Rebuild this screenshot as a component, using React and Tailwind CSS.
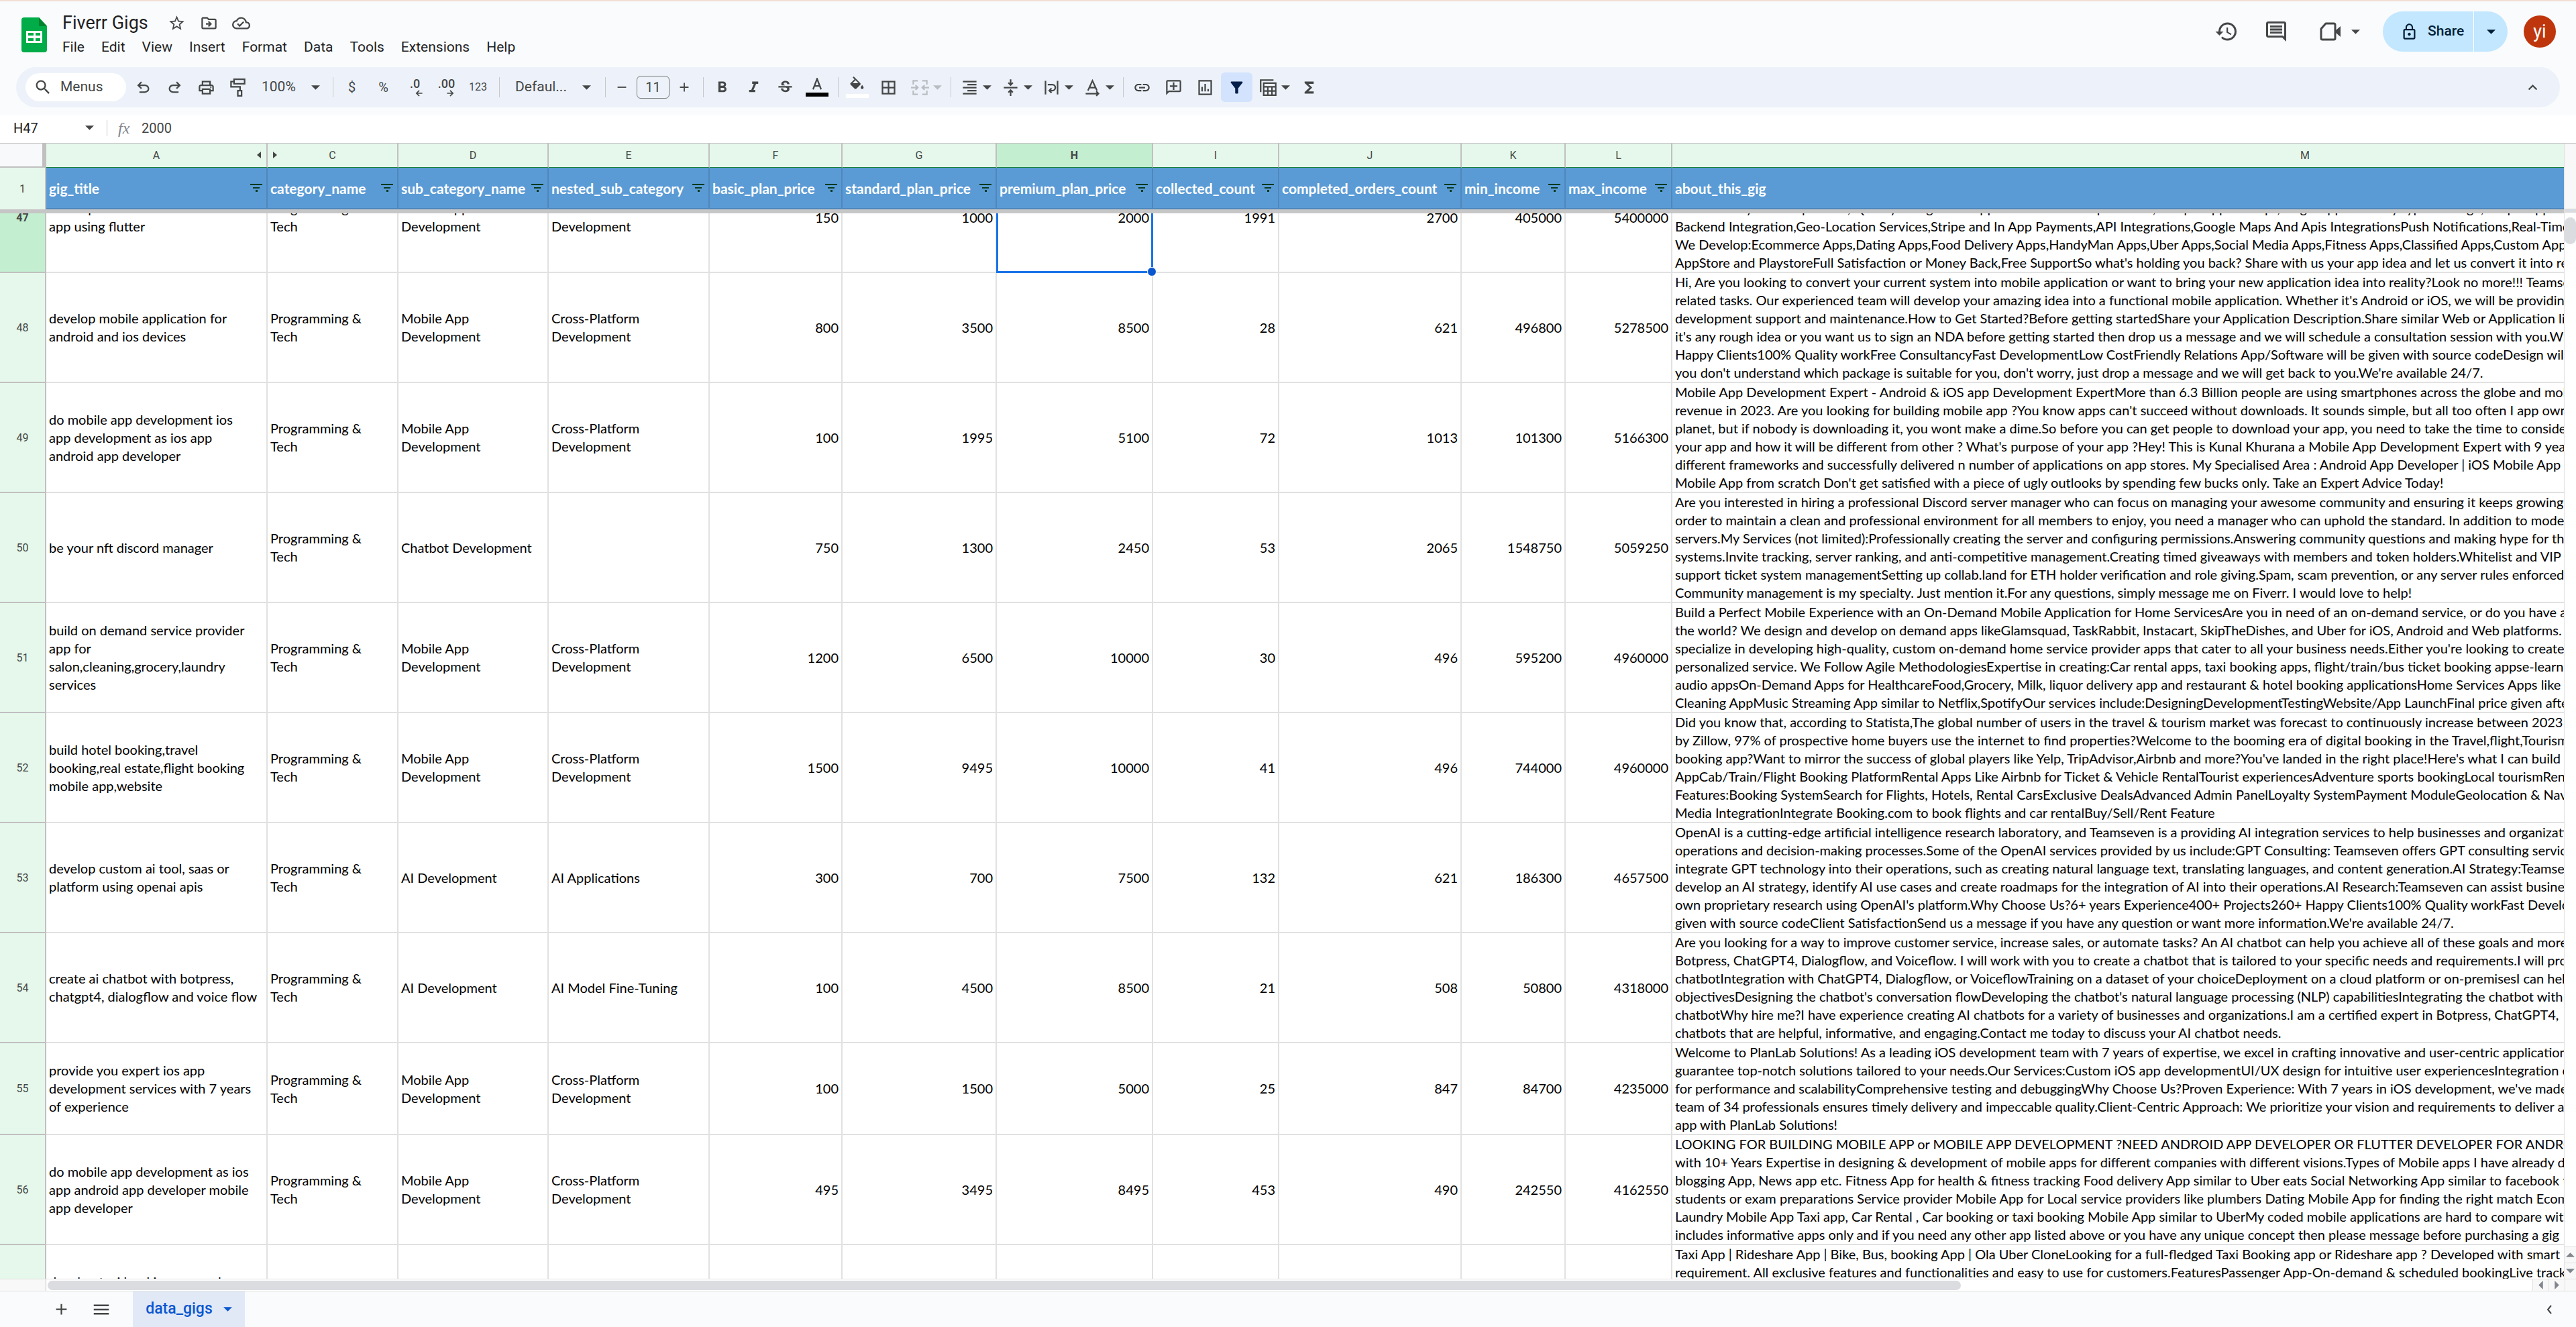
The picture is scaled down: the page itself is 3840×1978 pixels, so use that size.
import React, { useLayoutEffect, useRef, useState } from 'react';
import {
  MdOutlineStarBorder, MdOutlineDriveFileMove, MdOutlineCloudDone, MdHistory, MdOutlineComment,
  MdSearch, MdOutlineLocalPrintshop, MdFormatBold, MdFormatItalic, MdStrikethroughS, MdBorderAll,
  MdLink, MdOutlineAddComment, MdFunctions, MdAdd, MdRemove, MdMenu, MdKeyboardArrowUp,
  MdFilterAlt, MdFormatAlignRight, MdLockOutline,
} from 'react-icons/md';

const menus = ['File', 'Edit', 'View', 'Insert', 'Format', 'Data', 'Tools', 'Extensions', 'Help'];

const columns = [
  { letter: 'A', name: 'gig_title', width: 'w-[330px]' },
  { letter: 'C', name: 'category_name', width: 'w-[195px]' },
  { letter: 'D', name: 'sub_category_name', width: 'w-[224px]' },
  { letter: 'E', name: 'nested_sub_category', width: 'w-[240px]' },
  { letter: 'F', name: 'basic_plan_price', width: 'w-[198px]' },
  { letter: 'G', name: 'standard_plan_price', width: 'w-[230px]' },
  { letter: 'H', name: 'premium_plan_price', width: 'w-[233px]' },
  { letter: 'I', name: 'collected_count', width: 'w-[188px]' },
  { letter: 'J', name: 'completed_orders_count', width: 'w-[272px]' },
  { letter: 'K', name: 'min_income', width: 'w-[155px]' },
  { letter: 'L', name: 'max_income', width: 'w-[159px]' },
  { letter: 'M', name: 'about_this_gig', width: 'w-[1888px]' },
];

const prog = 'Programming &\nTech';
const mobile = 'Mobile App\nDevelopment';
const cross = 'Cross-Platform\nDevelopment';

const rows = [
  {
    no: 47,
    text: ['develop ios and android mobile\napp using flutter', prog, mobile, cross],
    nums: [150, 1000, 2000, 1991, 2700, 405000, 5400000],
    about: [
      'Are you looking for a mobile app developer?',
      'I will build a complete app for you.',
      'User Friendly and Responsive, Quality Design with app screens for both platforms, Unique app concept, single app for every type of usage, simple app',
      'Backend Integration,Geo-Location Services,Stripe and In App Payments,API Integrations,Google Maps And Apis IntegrationsPush Notifications,Real-Time Chat',
      'We Develop:Ecommerce Apps,Dating Apps,Food Delivery Apps,HandyMan Apps,Uber Apps,Social Media Apps,Fitness Apps,Classified Apps,Custom Apps',
      "AppStore and PlaystoreFull Satisfaction or Money Back,Free SupportSo what's holding you back? Share with us your app idea and let us convert it into reality",
    ],
  },
  {
    no: 48,
    text: ['develop mobile application for\nandroid and ios devices', prog, mobile, cross],
    nums: [800, 3500, 8500, 28, 621, 496800, 5278500],
    about: [
      'Hi, Are you looking to convert your current system into mobile application or want to bring your new application idea into reality?Look no more!!! Teamseven',
      "related tasks. Our experienced team will develop your amazing idea into a functional mobile application. Whether it's Android or iOS, we will be providing",
      'development support and maintenance.How to Get Started?Before getting startedShare your Application Description.Share similar Web or Application links',
      "it's any rough idea or you want us to sign an NDA before getting started then drop us a message and we will schedule a consultation session with you.Why",
      'Happy Clients100% Quality workFree ConsultancyFast DevelopmentLow CostFriendly Relations App/Software will be given with source codeDesign will be',
      "you don't understand which package is suitable for you, don't worry, just drop a message and we will get back to you.We're available 24/7.",
    ],
  },
  {
    no: 49,
    text: ['do mobile app development ios\napp development as ios app\nandroid app developer', prog, mobile, cross],
    nums: [100, 1995, 5100, 72, 1013, 101300, 5166300],
    about: [
      'Mobile App Development Expert - Android & iOS app Development ExpertMore than 6.3 Billion people are using smartphones across the globe and mobile',
      "revenue in 2023. Are you looking for building mobile app ?You know apps can't succeed without downloads. It sounds simple, but all too often I app owners",
      'planet, but if nobody is downloading it, you wont make a dime.So before you can get people to download your app, you need to take the time to consider',
      "your app and how it will be different from other ? What's purpose of your app ?Hey! This is Kunal Khurana a Mobile App Development Expert with 9 years",
      'different frameworks and successfully delivered n number of applications on app stores. My Specialised Area : Android App Developer | iOS Mobile App',
      "Mobile App from scratch Don't get satisfied with a piece of ugly outlooks by spending few bucks only. Take an Expert Advice Today!",
    ],
  },
  {
    no: 50,
    text: ['be your nft discord manager', prog, 'Chatbot Development', ''],
    nums: [750, 1300, 2450, 53, 2065, 1548750, 5059250],
    about: [
      'Are you interested in hiring a professional Discord server manager who can focus on managing your awesome community and ensuring it keeps growing?',
      'order to maintain a clean and professional environment for all members to enjoy, you need a manager who can uphold the standard. In addition to moderating',
      'servers.My Services (not limited):Professionally creating the server and configuring permissions.Answering community questions and making hype for the',
      'systems.Invite tracking, server ranking, and anti-competitive management.Creating timed giveaways with members and token holders.Whitelist and VIP role',
      'support ticket system managementSetting up collab.land for ETH holder verification and role giving.Spam, scam prevention, or any server rules enforced',
      'Community management is my specialty. Just mention it.For any questions, simply message me on Fiverr. I would love to help!',
    ],
  },
  {
    no: 51,
    text: ['build on demand service provider\napp for\nsalon,cleaning,grocery,laundry\nservices', prog, mobile, cross],
    nums: [1200, 6500, 10000, 30, 496, 595200, 4960000],
    about: [
      'Build a Perfect Mobile Experience with an On-Demand Mobile Application for Home ServicesAre you in need of an on-demand service, or do you have a',
      'the world? We design and develop on demand apps likeGlamsquad, TaskRabbit, Instacart, SkipTheDishes, and Uber for iOS, Android and Web platforms. We',
      "specialize in developing high-quality, custom on-demand home service provider apps that cater to all your business needs.Either you're looking to create",
      'personalized service. We Follow Agile MethodologiesExpertise in creating:Car rental apps, taxi booking apps, flight/train/bus ticket booking appse-learning',
      'audio appsOn-Demand Apps for HealthcareFood,Grocery, Milk, liquor delivery app and restaurant & hotel booking applicationsHome Services Apps like',
      'Cleaning AppMusic Streaming App similar to Netflix,SpotifyOur services include:DesigningDevelopmentTestingWebsite/App LaunchFinal price given after',
    ],
  },
  {
    no: 52,
    text: ['build hotel booking,travel\nbooking,real estate,flight booking\nmobile app,website', prog, mobile, cross],
    nums: [1500, 9495, 10000, 41, 496, 744000, 4960000],
    about: [
      'Did you know that, according to Statista,The global number of users in the travel & tourism market was forecast to continuously increase between 2023',
      'by Zillow, 97% of prospective home buyers use the internet to find properties?Welcome to the booming era of digital booking in the Travel,flight,Tourism',
      "booking app?Want to mirror the success of global players like Yelp, TripAdvisor,Airbnb and more?You've landed in the right place!Here's what I can build",
      'AppCab/Train/Flight Booking PlatformRental Apps Like Airbnb for Ticket & Vehicle RentalTourist experiencesAdventure sports bookingLocal tourismRental',
      'Features:Booking SystemSearch for Flights, Hotels, Rental CarsExclusive DealsAdvanced Admin PanelLoyalty SystemPayment ModuleGeolocation & Nav',
      'Media IntegrationIntegrate Booking.com to book flights and car rentalBuy/Sell/Rent Feature',
    ],
  },
  {
    no: 53,
    text: ['develop custom ai tool, saas or\nplatform using openai apis', prog, 'AI Development', 'AI Applications'],
    nums: [300, 700, 7500, 132, 621, 186300, 4657500],
    about: [
      'OpenAI is a cutting-edge artificial intelligence research laboratory, and Teamseven is a providing AI integration services to help businesses and organizations',
      'operations and decision-making processes.Some of the OpenAI services provided by us include:GPT Consulting: Teamseven offers GPT consulting services',
      'integrate GPT technology into their operations, such as creating natural language text, translating languages, and content generation.AI Strategy:Teamseven',
      'develop an AI strategy, identify AI use cases and create roadmaps for the integration of AI into their operations.AI Research:Teamseven can assist business',
      "own proprietary research using OpenAI's platform.Why Choose Us?6+ years Experience400+ Projects260+ Happy Clients100% Quality workFast Development",
      "given with source codeClient SatisfactionSend us a message if you have any question or want more information.We're available 24/7.",
    ],
  },
  {
    no: 54,
    text: ['create ai chatbot with botpress,\nchatgpt4, dialogflow and voice flow', prog, 'AI Development', 'AI Model Fine-Tuning'],
    nums: [100, 4500, 8500, 21, 508, 50800, 4318000],
    about: [
      'Are you looking for a way to improve customer service, increase sales, or automate tasks? An AI chatbot can help you achieve all of these goals and more.',
      'Botpress, ChatGPT4, Dialogflow, and Voiceflow. I will work with you to create a chatbot that is tailored to your specific needs and requirements.I will provide',
      'chatbotIntegration with ChatGPT4, Dialogflow, or VoiceflowTraining on a dataset of your choiceDeployment on a cloud platform or on-premisesI can help',
      "objectivesDesigning the chatbot's conversation flowDeveloping the chatbot's natural language processing (NLP) capabilitiesIntegrating the chatbot with",
      'chatbotWhy hire me?I have experience creating AI chatbots for a variety of businesses and organizations.I am a certified expert in Botpress, ChatGPT4,',
      'chatbots that are helpful, informative, and engaging.Contact me today to discuss your AI chatbot needs.',
    ],
  },
  {
    no: 55,
    text: ['provide you expert ios app\ndevelopment services with 7 years\nof experience', prog, mobile, cross],
    nums: [100, 1500, 5000, 25, 847, 84700, 4235000],
    about: [
      'Welcome to PlanLab Solutions! As a leading iOS development team with 7 years of expertise, we excel in crafting innovative and user-centric applications',
      'guarantee top-notch solutions tailored to your needs.Our Services:Custom iOS app developmentUI/UX design for intuitive user experiencesIntegration of',
      "for performance and scalabilityComprehensive testing and debuggingWhy Choose Us?Proven Experience: With 7 years in iOS development, we've made",
      'team of 34 professionals ensures timely delivery and impeccable quality.Client-Centric Approach: We prioritize your vision and requirements to deliver an',
      'app with PlanLab Solutions!',
    ],
  },
  {
    no: 56,
    text: ['do mobile app development as ios\napp android app developer mobile\napp developer', prog, mobile, cross],
    nums: [495, 3495, 8495, 453, 490, 242550, 4162550],
    about: [
      'LOOKING FOR BUILDING MOBILE APP or MOBILE APP DEVELOPMENT ?NEED ANDROID APP DEVELOPER OR FLUTTER DEVELOPER FOR ANDROID & iOS ?',
      'with 10+ Years Expertise in designing & development of mobile apps for different companies with different visions.Types of Mobile apps I have already done',
      'blogging App, News app etc. Fitness App for health & fitness tracking Food delivery App similar to Uber eats Social Networking App similar to facebook for',
      'students or exam preparations Service provider Mobile App for Local service providers like plumbers Dating Mobile App for finding the right match Ecom',
      'Laundry Mobile App Taxi app, Car Rental , Car booking or taxi booking Mobile App similar to UberMy coded mobile applications are hard to compare with',
      'includes informative apps only and if you need any other app listed above or you have any unique concept then please message before purchasing a gig',
    ],
  },
  {
    no: 57,
    text: ['develop taxi booking app and\nrideshare app for android\nand ios', prog, mobile, cross],
    nums: ['', '', '', '', '', '', ''],
    about: [
      'Taxi App | Rideshare App | Bike, Bus, booking App | Ola Uber CloneLooking for a full-fledged Taxi Booking app or Rideshare app ? Developed with smart',
      'requirement. All exclusive features and functionalities and easy to use for customers.FeaturesPassenger App-On-demand & scheduled bookingLive tracking',
      ' ', ' ', ' ', ' ',
    ],
  },
];

const Caret = ({ className = '' }) => (
  <svg viewBox="0 0 12 6" className={`h-[7px] w-[13px] shrink-0 ${className}`} fill="currentColor" aria-hidden="true">
    <path d="M0 0h12L6 6z" />
  </svg>
);

const Separator = () => <div className="ml-2 mr-1 h-[30px] w-px shrink-0 bg-[#c7c7c7]" />;

const Tool = ({ label, active, children }) => (
  <button
    type="button"
    aria-label={label}
    className={`flex h-[44px] w-[47px] shrink-0 items-center justify-center rounded-md text-[27px] ${
      active ? 'bg-[#d3e3fd] text-[#041e49]' : ''
    }`}
  >
    {children}
  </button>
);

const DropTool = ({ label, disabled, children }) => (
  <button
    type="button"
    aria-label={label}
    disabled={disabled}
    className={`flex h-[44px] w-[61px] shrink-0 items-center pl-2 text-[27px] ${disabled ? 'opacity-30' : ''}`}
  >
    <span className="flex w-[30px] justify-center">{children}</span>
    <span className="flex w-[22px] justify-center"><Caret /></span>
  </button>
);

// stroke icon on a 24 grid
const Glyph = ({ children, className = 'size-[27px]' }) => (
  <svg viewBox="0 0 24 24" className={className} fill="none" stroke="currentColor" strokeWidth="2" aria-hidden="true">
    {children}
  </svg>
);

const FilterMark = () => (
  <button type="button" aria-label="Filter column" className="shrink-0 text-[#0a3a1e]">
    <svg viewBox="0 0 18 12" className="h-3 w-[18px]" fill="currentColor" aria-hidden="true">
      <path d="M0 0h18v2H0zM4 5h10v2H4zM8 9h3v3H8z" />
    </svg>
  </button>
);

const Cols = () => (
  <colgroup>
    <col className="w-[69px]" />
    {columns.map((c) => <col key={c.letter} className={c.width} />)}
  </colgroup>
);

const Header = () => (
  <header className="flex h-[98px] items-start justify-between pl-8 pr-[30px]">
    <div className="flex">
      <svg viewBox="0 0 38 52" className="mt-6 h-[52px] w-[38px]" aria-label="Sheets">
        <path d="M4 0h22l12 13v35a4 4 0 0 1-4 4H4a4 4 0 0 1-4-4V4a4 4 0 0 1 4-4z" fill="#00ac47" />
        <path d="M26 0l12 13H26z" fill="#00832d" />
        <path d="M7 20h24v18H7zm3 3v4h8v-4zm11 0v4h7v-4zM10 31v4h8v-4zm11 0v4h7v-4z" fill="#fff" fillRule="evenodd" />
      </svg>
      <div className="pl-[23px] pt-3">
        <div className="flex h-[40px] items-center text-[#444746]">
          <h1 className="w-[157px] text-[27px] leading-[40px] text-[#1f1f1f]">Fiverr Gigs</h1>
          <button type="button" aria-label="Star" className="flex w-12 text-[27px]"><MdOutlineStarBorder /></button>
          <button type="button" aria-label="Move" className="flex w-12 text-[27px]"><MdOutlineDriveFileMove /></button>
          <button type="button" aria-label="Saved to Drive" className="flex w-12 text-[27px]"><MdOutlineCloudDone /></button>
        </div>
        <nav className="mt-0.5 flex gap-[25px] text-[21px] leading-[28px] text-[#1f1f1f]">
          {menus.map((m) => <button type="button" key={m}>{m}</button>)}
        </nav>
      </div>
    </div>

    <div className="flex items-center pt-[15px] text-[#444746]">
      <button type="button" aria-label="Version history" className="text-[36px]"><MdHistory /></button>
      <button type="button" aria-label="Comments" className="ml-[38px] text-[36px]"><MdOutlineComment /></button>
      <button type="button" aria-label="Meet" className="ml-[47px] flex items-center gap-4">
        <svg viewBox="0 0 31 28" className="h-[28px] w-[31px]" aria-hidden="true">
          <path d="M9 2h12a2 2 0 0 1 2 2v20a2 2 0 0 1-2 2H4a2 2 0 0 1-2-2V10z" fill="none" stroke="currentColor" strokeWidth="3" strokeLinejoin="round" />
          <path d="M23 13l8-7v16l-8-7z" fill="currentColor" />
        </svg>
        <Caret />
      </button>
      <div className="ml-[34px] flex h-[60px] overflow-hidden rounded-full bg-[#c2e7ff] text-[#001d35]">
        <button type="button" className="flex w-[136px] items-center gap-[14px] border-r border-white pl-[26px] text-[21px] font-medium">
          <MdLockOutline className="size-[27px]" />
          Share
        </button>
        <button type="button" aria-label="Share options" className="flex w-[50px] items-center justify-center"><Caret /></button>
      </div>
      <button type="button" className="ml-6 flex size-12 items-center justify-center rounded-full bg-[#bf360c] text-[27px] text-white">
        yi
      </button>
    </div>
  </header>
);

const Toolbar = () => (
  <div className="ml-6 mr-6 flex h-[60px] items-center rounded-full bg-[#edf2fa] pl-[14px] text-[#444746]">
    <button type="button" className="mr-0.5 flex h-[42px] w-[150px] shrink-0 items-center gap-3 rounded-full bg-white pl-3 text-[21px]">
      <MdSearch className="size-[28px]" />
      Menus
    </button>
    <Tool label="Undo"><svg viewBox="0 -960 960 960" className="size-[27px]" fill="currentColor"><path d="M280-200v-80h284q63 0 109.5-40T720-420q0-60-46.5-100T564-560H312l104 104-56 56-200-200 200-200 56 56-104 104h252q97 0 166.500 63T800-420q0 94-69.500 157T564-200H280Z" /></svg></Tool>
    <Tool label="Redo"><svg viewBox="0 -960 960 960" className="size-[27px]" fill="currentColor"><path d="M396-200q-97 0-166.500-63T160-420q0-94 69.500-157T396-640h252L544-744l56-56 200 200-200 200-56-56 104-104H396q-63 0-109.500 40T240-420q0 60 46.500 100T396-280h284v80H396Z" /></svg></Tool>
    <Tool label="Print"><MdOutlineLocalPrintshop /></Tool>
    <Tool label="Paint format">
      <Glyph><path d="M7 1h14v6H7zM7 4H3v7h12v5M12 16h5v7h-5z" /></Glyph>
    </Tool>
    <label className="flex w-[110px] shrink-0 items-center pl-3 text-[21px]">
      <select aria-label="Zoom" className="w-[74px] appearance-none"><option>100%</option></select>
      <Caret />
    </label>
    <Separator />
    <Tool label="Currency"><span className="text-[20px]">$</span></Tool>
    <Tool label="Percent"><span className="text-[20px]">%</span></Tool>
    <Tool label="Decrease decimal places">
      <span className="flex flex-col text-[18px] font-medium leading-[18px]">
        .0
        <Glyph className="ml-3 h-[10px] w-3"><path d="M23 12H3M12 2L2 12l10 10" strokeWidth="4" /></Glyph>
      </span>
    </Tool>
    <Tool label="Increase decimal places">
      <span className="flex flex-col text-[18px] font-medium leading-[18px]">
        .00
        <Glyph className="ml-3 h-[10px] w-3"><path d="M1 12h20M12 2l10 10-10 10" strokeWidth="4" /></Glyph>
      </span>
    </Tool>
    <Tool label="More formats"><span className="text-[16px]">123</span></Tool>
    <Separator />
    <label className="flex w-[145px] shrink-0 items-center pl-[19px] text-[21px]">
      <select aria-label="Font" className="w-[100px] appearance-none"><option>Defaul...</option></select>
      <Caret />
    </label>
    <Separator />
    <button type="button" aria-label="Decrease font size" className="flex w-10 shrink-0 justify-center text-[22px]"><MdRemove /></button>
    <input aria-label="Font size" defaultValue="11" className="mx-0.5 h-[34px] w-[49px] shrink-0 rounded-md border border-[#747775] text-center text-[20px]" />
    <button type="button" aria-label="Increase font size" className="flex w-10 shrink-0 justify-center text-[22px]"><MdAdd /></button>
    <Separator />
    <Tool label="Bold"><MdFormatBold /></Tool>
    <Tool label="Italic"><MdFormatItalic /></Tool>
    <Tool label="Strikethrough"><MdStrikethroughS /></Tool>
    <Tool label="Text color">
      <span className="flex flex-col items-center">
        <Glyph className="h-[18px] w-5"><path d="M4 23L12 2l8 21M7 16h10" strokeWidth="3" /></Glyph>
        <span className="mt-1 h-[6px] w-[34px] bg-black" />
      </span>
    </Tool>
    <Separator />
    <Tool label="Fill color">
      <span className="flex flex-col items-center">
        <svg viewBox="0 0 24 20" className="h-[22px] w-[27px]" fill="currentColor" aria-hidden="true">
          <path d="M16.600 9L7.600 0 6.200 1.400l2.400 2.400-5.200 5.100a1.500 1.500 0 0 0 0 2.200l5.500 5.500c.6.6 1.600.6 2.200 0l5.500-5.500c.5-.6.5-1.500-.1-2.100zM6 9l4-4 4 4zM19 11.500s-2 2.200-2 3.500a2 2 0 0 0 4 0c0-1.300-2-3.500-2-3.500z" />
        </svg>
        <span className="mt-1 h-[6px] w-[34px] bg-white" />
      </span>
    </Tool>
    <Tool label="Borders"><MdBorderAll /></Tool>
    <DropTool label="Merge cells" disabled>
      <Glyph><path d="M9 3H3v5M15 3h6v5M9 21H3v-5M15 21h6v-5M0 12h9M6 9l3 3-3 3M24 12h-9M18 9l-3 3 3 3" /></Glyph>
    </DropTool>
    <Separator />
    <DropTool label="Horizontal align"><MdFormatAlignRight /></DropTool>
    <DropTool label="Vertical align">
      <Glyph><path d="M3 12h18M12 1v7M9 5.500l3 3 3-3M12 23v-7M9 18.500l3-3 3 3" /></Glyph>
    </DropTool>
    <DropTool label="Text wrapping">
      <Glyph><path d="M4 3v18M20 3v18M7 8h6a4 4 0 0 1 0 8h-3M12 13l-3 3 3 3" /></Glyph>
    </DropTool>
    <DropTool label="Text rotation">
      <Glyph><path d="M6 16L12 3l6 13M8 12h8M3 20h17M17 17l3 3-3 3" /></Glyph>
    </DropTool>
    <Separator />
    <Tool label="Insert link"><MdLink /></Tool>
    <Tool label="Insert comment"><MdOutlineAddComment className="-scale-x-100" /></Tool>
    <Tool label="Insert chart">
      <Glyph><path d="M4 3h16v18H4zM8 17V11M12 17V7M16 17v-3" /></Glyph>
    </Tool>
    <Tool label="Create a filter" active><MdFilterAlt /></Tool>
    <DropTool label="Table views">
      <Glyph><path d="M2 18V2h17M6 6h16v16H6zM6 11h16M6 16.500h16M11.500 11v11M17 11v11" /></Glyph>
    </DropTool>
    <Tool label="Functions"><MdFunctions /></Tool>
    <button type="button" aria-label="Hide the menus" className="ml-auto mr-[27px] text-[27px]"><MdKeyboardArrowUp /></button>
  </div>
);

const FormulaBar = () => (
  <div className="mt-3 flex h-[42px] items-center border-b border-[#c0c0c0] bg-white pb-1 text-[20px] text-[#1f1f1f]">
    <input aria-label="Name box" defaultValue="H47" className="w-[107px] pl-5 outline-none" />
    <button type="button" aria-label="Named ranges" className="flex w-[52px] justify-center text-[#444746]"><Caret /></button>
    <div className="h-6 w-px bg-[#c7c7c7]" />
    <span className="w-[51px] pl-4 font-['Liberation_Serif',serif] text-[24px] italic leading-[24px] text-[#80868b]">fx</span>
    <input aria-label="Formula" defaultValue="2000" className="min-w-0 flex-1 text-[#444746] outline-none" />
  </div>
);

const Grid = () => {
  const bodyRef = useRef(null);
  const [selected] = useState({ row: 47, letter: 'H' });

  useLayoutEffect(() => {
    bodyRef.current.scrollTop = 75;
  }, []);

  return (
    <div className="flex min-h-0 flex-1 flex-col bg-white">
      <div className="flex min-h-0 flex-1">
        <div className="flex min-w-0 flex-1 flex-col">
          <div className="shrink-0 overflow-hidden">
            <table className="w-[4381px] table-fixed border-separate border-spacing-0 text-left">
              <Cols />
              <thead>
                <tr className="h-[36px] text-center text-[16px] text-[#444746]">
                  <td className="border-b-2 border-r-[6px] border-[#c0c0c0] bg-[#f8f9fa]" />
                  {columns.map((c) => (
                    <th
                      key={c.letter}
                      scope="col"
                      className={`relative border-b border-r-2 border-b-[#188038] border-r-[#c0c0c0] p-0 text-center ${
                        c.letter === selected.letter ? 'bg-[#c3eed0] font-bold' : 'bg-[#e6f8eb] font-normal'
                      }`}
                    >
                      {c.letter}
                      {c.letter === 'A' && (
                        <svg viewBox="0 0 6 10" className="absolute right-2 top-3 h-[10px] w-[6px]" fill="currentColor"><path d="M6 0v10L0 5z" /></svg>
                      )}
                      {c.letter === 'C' && (
                        <svg viewBox="0 0 6 10" className="absolute left-2 top-3 h-[10px] w-[6px]" fill="currentColor"><path d="M0 0v10l6-5z" /></svg>
                      )}
                    </th>
                  ))}
                </tr>
                <tr className="h-[62px] font-['Lato',sans-serif] text-[21px] leading-[27px] text-white">
                  <td className="border-r-2 border-[#c0c0c0] bg-[#e6f8eb] text-center font-['Roboto',sans-serif] text-[16px] text-[#444746]">1</td>
                  {columns.map((c) => (
                    <th key={c.letter} scope="col" className="border-b-2 border-r-2 border-[#4f87bd] bg-[#5b9bd5] p-0 pl-1">
                      <div className="flex items-center justify-between pr-1.5">
                        {c.name}
                        {c.letter !== 'M' && <FilterMark />}
                      </div>
                    </th>
                  ))}
                </tr>
              </thead>
            </table>
          </div>
          <div className="h-[6px] shrink-0 bg-[#c6c6c6]" />
          <div ref={bodyRef} className="min-h-0 flex-1 overflow-hidden">
            <table className="w-[4381px] table-fixed border-separate border-spacing-0">
              <Cols />
              <tbody className="font-['Lato',sans-serif] text-[20px] leading-[27px] text-black">
                {rows.map((r) => (
                  <tr key={r.no}>
                    <th
                      scope="row"
                      className={`border-b-2 border-r-2 border-[#c0c0c0] p-0 font-['Roboto',sans-serif] text-[16px] text-[#444746] ${
                        r.no === selected.row ? 'bg-[#c3eed0] font-bold' : 'bg-[#e6f8eb] font-normal'
                      }`}
                    >
                      {r.no}
                    </th>
                    {r.text.map((t, i) => (
                      <td key={i} className="whitespace-pre border-b-2 border-r-2 border-[#e1e1e1] p-0 pl-1">{t}</td>
                    ))}
                    {r.nums.map((n, i) => (
                      <td key={i} className="relative border-b-2 border-r-2 border-[#e1e1e1] p-0 pr-1 text-right">
                        {n}
                        {r.no === selected.row && columns[i + 4].letter === selected.letter && (
                          <div className="absolute -bottom-0.5 -left-px -right-0.5 top-0 border-[3px] border-[#1a73e8]">
                            <span className="absolute -bottom-2 -right-2 z-10 size-[14px] rounded-full border border-white bg-[#0b57d0]" />
                          </div>
                        )}
                      </td>
                    ))}
                    <td className="overflow-hidden whitespace-pre border-b-2 border-[#e1e1e1] p-0 pl-1">{r.about.join('\n')}</td>
                  </tr>
                ))}
              </tbody>
            </table>
          </div>
        </div>
        {/* vertical scrollbar */}
        <div className="flex w-[18px] flex-col border-l border-[#e1e1e1]">
          <div className="h-[97px] bg-[#f8f8f8]" />
          <div className="h-[6px] bg-[#dadce0]" />
          <div className="mt-[7px] h-10 rounded-full bg-[#dadce0]" />
          <div className="mt-auto flex h-6 items-center justify-center border-t border-[#e1e1e1] bg-[#f8f8f8] text-[#80868b]"><Caret className="rotate-180" /></div>
          <div className="flex h-6 items-center justify-center border-t border-[#e1e1e1] bg-[#f8f8f8] text-[#80868b]"><Caret /></div>
        </div>
      </div>
      {/* horizontal scrollbar */}
      <div className="flex h-[18px] border-t border-[#e1e1e1]">
        <div className="w-[69px] border-r border-[#c0c0c0] bg-[#f8f8f8]" />
        <div className="flex-1 pl-0.5 pt-0.5"><div className="h-[14px] w-[77%] rounded-full bg-[#dadce0]" /></div>
        <div className="flex w-6 items-center justify-center border-l border-[#e1e1e1] bg-[#f8f8f8] text-[#80868b]"><Caret className="rotate-90" /></div>
        <div className="flex w-6 items-center justify-center border-l border-[#e1e1e1] bg-[#f8f8f8] text-[#80868b]"><Caret className="-rotate-90" /></div>
        <div className="w-[17px] border-l border-[#e1e1e1] bg-[#f8f8f8]" />
      </div>
    </div>
  );
};

const SheetTabs = () => (
  <footer className="flex h-[54px] items-center border-t border-[#e1e3e1] pl-[78px] text-[#444746]">
    <button type="button" aria-label="Add sheet" className="flex w-[58px] text-[27px]"><MdAdd /></button>
    <button type="button" aria-label="All sheets" className="flex w-[62px] text-[30px]"><MdMenu /></button>
    <button type="button" className="flex h-full w-[167px] items-center justify-center gap-4 bg-[#e1e9f7] text-[23px] font-medium text-[#0b57d0]">
      data_gigs
      <Caret />
    </button>
    <button type="button" aria-label="Show side panel" className="ml-auto mr-9">
      <svg viewBox="0 0 8 14" className="h-[14px] w-2" fill="none" stroke="currentColor" strokeWidth="2"><path d="M7 1L2 7l5 6" /></svg>
    </button>
  </footer>
);

const App = () => {
  return (
    <div className="flex h-screen flex-col overflow-hidden border-t-2 border-[#f2dfd3] bg-[#f9fbfd] font-['Roboto',sans-serif]">
      <Header />
      <Toolbar />
      <FormulaBar />
      <Grid />
      <SheetTabs />
    </div>
  );
};

export default App;
